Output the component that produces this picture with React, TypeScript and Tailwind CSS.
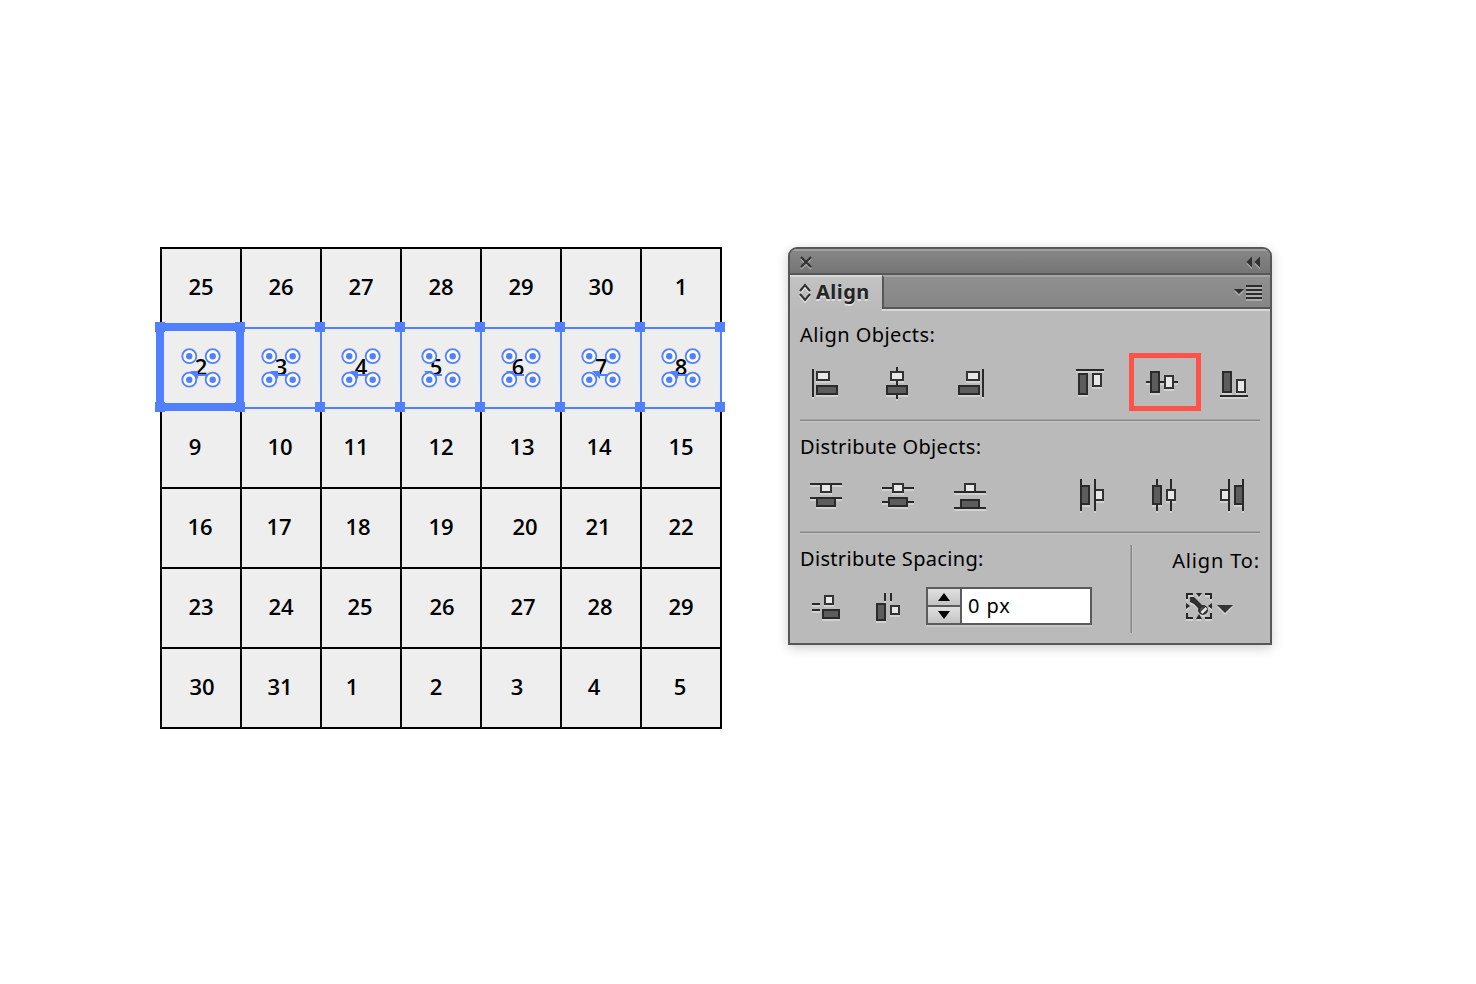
import type { ReactNode } from "react";

type Day = [label: string, shift: number];

const weeks: Day[][] = [
  [["25", 0], ["26", 0], ["27", 0], ["28", 0], ["29", 0], ["30", 0], ["1", 0]],
  [["2", 0], ["3", 0], ["4", 0], ["5", -5], ["6", -3], ["7", 0], ["8", 0]],
  [["9", -6], ["10", -1], ["11", -5], ["12", 0], ["13", 1], ["14", -2], ["15", 0]],
  [["16", -1], ["17", -2], ["18", -3], ["19", 0], ["20", 4], ["21", -3], ["22", 0]],
  [["23", 0], ["24", 0], ["25", -1], ["26", 1], ["27", 2], ["28", -1], ["29", 0]],
  [["30", 1], ["31", -1], ["1", -9], ["2", -5], ["3", -4], ["4", -7], ["5", -1]],
];

const BLUE = "#5080ff";
const markers = [190, 270, 350, 424, 506, 592, 670];

function Selection() {
  return (
    <svg className="pointer-events-none absolute -left-[5px] top-[75px]" width="572" height="92" viewBox="155 322 572 92" fill={BLUE}>
      <rect x="160" y="327" width="562" height="2" />
      <rect x="160" y="407" width="562" height="2" />
      {[0, 1, 2, 3, 4, 5, 6, 7].map((i) => (
        <g key={i}>
          <rect x={160 + i * 80} y="327" width="2" height="82" />
          <rect x={155 + i * 80} y="322" width="10" height="10" />
          <rect x={155 + i * 80} y="402" width="10" height="10" />
        </g>
      ))}
      <rect x="160" y="327" width="80" height="80" fill="none" stroke={BLUE} strokeWidth="8" />
      {markers.map((x, i) => (
        <g key={x}>
          <path d={`M${x} 371h8v8z`} />
          <rect x={x + 4} y="374" width="14" height="2" />
          {[189.3, 212.7].map((cx) =>
            [356.2, 379.7].map((cy) => (
              <g key={`${cx}-${cy}`}>
                <circle cx={cx + i * 80} cy={cy} r="7" fill="#fff" stroke={BLUE} strokeWidth="1.8" />
                <circle cx={cx + i * 80} cy={cy} r="3.2" />
              </g>
            )),
          )}
        </g>
      ))}
    </svg>
  );
}

function Calendar() {
  return (
    <div className="relative h-[482px] w-[562px] border-l-2 border-t-2 border-black bg-[#eee]">
      <div className="grid grid-cols-[repeat(7,80px)] font-['Open_Sans',sans-serif] text-[22px] font-semibold leading-none text-black">
        {weeks.flat().map(([label, shift], i) => (
          <div key={i} className="flex h-20 items-center justify-center border-b-2 border-r-2 border-black pb-[5px]">
            <span style={{ marginLeft: shift * 2 }}>{label}</span>
          </div>
        ))}
      </div>
      <div className="absolute -left-[2px] -top-[2px]">
        <div className="relative">
          <Selection />
        </div>
      </div>
    </div>
  );
}

type Box = { x: number; y: number; w: number; h: number };

function Line({ x, y, w, h }: Box) {
  return <rect x={x} y={y} width={w} height={h} fill="#292929" />;
}

function Dark({ x, y, w, h }: Box) {
  return <rect x={x + 1} y={y + 1} width={w - 2} height={h - 2} fill="#5d5d5d" stroke="#2b2b2b" strokeWidth="2" />;
}

function Light({ x, y, w, h }: Box) {
  return <rect x={x + 1} y={y + 1} width={w - 2} height={h - 2} fill="#e8e8e8" stroke="#333" strokeWidth="2" />;
}

function Icon({ x, y, w = 52, h = 40, children }: { x: number; y: number; w?: number; h?: number; children: ReactNode }) {
  return (
    <svg className="block shrink-0 [filter:drop-shadow(0_2px_0_#d2d2d2)]" width={w} height={h} viewBox={`${x} ${y} ${w} ${h}`}>
      {children}
    </svg>
  );
}

function Divider() {
  return (
    <div className="h-[3px]">
      <div className="h-px bg-[#a3a3a3]" />
      <div className="h-px bg-[#858585]" />
      <div className="h-px bg-[#c5c5c5]" />
    </div>
  );
}

function AlignObjects() {
  return (
    <div className="flex h-10 justify-between">
      <div className="flex gap-5">
        <Icon x={800} y={363}>
          <Line x={812} y={369} w={2} h={28} />
          <Light x={816} y={371} w={14} h={10} />
          <Dark x={816} y={385} w={22} h={10} />
        </Icon>
        <Icon x={872} y={363}>
          <Line x={896} y={367} w={2} h={32} />
          <Light x={890} y={371} w={14} h={10} />
          <Dark x={886} y={385} w={22} h={10} />
        </Icon>
        <Icon x={944} y={363}>
          <Light x={966} y={371} w={14} h={10} />
          <Dark x={958} y={385} w={22} h={10} />
          <Line x={982} y={369} w={2} h={28} />
        </Icon>
      </div>
      <div className="flex gap-5">
        <Icon x={1064} y={363}>
          <Line x={1076} y={369} w={28} h={2} />
          <Dark x={1078} y={373} w={10} h={22} />
          <Light x={1092} y={373} w={10} h={14} />
        </Icon>
        <div className="relative">
          <Icon x={1136} y={363}>
            <Line x={1146} y={381} w={32} h={2} />
            <Dark x={1150} y={371} w={10} h={22} />
            <Light x={1164} y={375} w={10} h={14} />
          </Icon>
          <div className="absolute -left-[7px] -top-[10px] h-[58px] w-[72px] border-[5px] border-[#ff5349]" />
        </div>
        <Icon x={1208} y={363}>
          <Dark x={1222} y={371} w={10} h={22} />
          <Light x={1236} y={379} w={10} h={14} />
          <Line x={1220} y={395} w={28} h={2} />
        </Icon>
      </div>
    </div>
  );
}

function DistributeObjects() {
  return (
    <div className="flex h-10 justify-between">
      <div className="flex gap-5">
        <Icon x={800} y={475}>
          <Light x={820} y={483} w={12} h={10} />
          <Dark x={816} y={497} w={20} h={10} />
          <Line x={810} y={483} w={32} h={2} />
          <Line x={810} y={497} w={32} h={2} />
        </Icon>
        <Icon x={872} y={475}>
          <Line x={882} y={487} w={32} h={2} />
          <Line x={882} y={501} w={32} h={2} />
          <Light x={892} y={483} w={12} h={10} />
          <Dark x={888} y={497} w={20} h={10} />
        </Icon>
        <Icon x={944} y={475}>
          <Light x={964} y={483} w={12} h={10} />
          <Dark x={960} y={499} w={20} h={10} />
          <Line x={954} y={491} w={32} h={2} />
          <Line x={954} y={507} w={32} h={2} />
        </Icon>
      </div>
      <div className="flex gap-5">
        <Icon x={1064} y={475}>
          <Dark x={1080} y={485} w={10} h={20} />
          <Light x={1094} y={489} w={10} h={12} />
          <Line x={1080} y={479} w={2} h={32} />
          <Line x={1094} y={479} w={2} h={32} />
        </Icon>
        <Icon x={1136} y={475}>
          <Line x={1156} y={479} w={2} h={32} />
          <Line x={1170} y={479} w={2} h={32} />
          <Dark x={1152} y={485} w={10} h={20} />
          <Light x={1166} y={489} w={10} h={12} />
        </Icon>
        <Icon x={1208} y={475}>
          <Light x={1220} y={489} w={10} h={12} />
          <Dark x={1234} y={485} w={10} h={20} />
          <Line x={1228} y={479} w={2} h={32} />
          <Line x={1242} y={479} w={2} h={32} />
        </Icon>
      </div>
    </div>
  );
}

function SpacingField() {
  return (
    <div className="flex h-[38px] w-[166px] border-2 border-[#5b5b5b] bg-white [box-shadow:0_2px_0_#c8c8c8]">
      <div className="flex w-[34px] flex-col border-r-2 border-[#5b5b5b]">
        <div className="flex h-[18px] items-center justify-center border-b-2 border-[#5b5b5b] bg-linear-to-b from-[#e0e0e0] to-[#c4c4c4]">
          <svg width="12" height="8" viewBox="0 0 12 8">
            <path d="M6 0l6 8H0z" />
          </svg>
        </div>
        <div className="flex h-4 items-center justify-center bg-linear-to-b from-[#e0e0e0] to-[#c4c4c4]">
          <svg width="12" height="8" viewBox="0 0 12 8">
            <path d="M0 0h12L6 8z" />
          </svg>
        </div>
      </div>
      <div className="pl-[6px] text-[20px] leading-[34px] tracking-[0.9px]">0 px</div>
    </div>
  );
}

function AlignPanel() {
  return (
    <div className="h-[398px] w-[484px] overflow-hidden rounded-t-[9px] border-2 border-[#575757] bg-[#bababa] font-['Noto_Sans',sans-serif] text-black [box-shadow:0_3px_12px_rgba(0,0,0,0.2)]">
      <div className="flex h-[26px] items-center justify-between border-b-2 border-t-2 border-b-[#575757] border-t-[#a2a2a2] bg-linear-to-b from-[#868686] to-[#757575] pl-[10px] pr-[9px]">
        <svg className="[filter:drop-shadow(0_2px_0_#a2a2a2)]" width="12" height="14" viewBox="0 0 12 14">
          <path d="M1 2l10 10M11 2L1 12" stroke="#303030" strokeWidth="2" />
        </svg>
        <svg className="[filter:drop-shadow(0_2px_0_#a2a2a2)]" width="15" height="14" viewBox="0 0 15 14" fill="#303030">
          <path d="M6 1.500v11L0.500 7zM14 1.500v11L8.500 7z" />
        </svg>
      </div>
      <div className="flex h-9">
        <div className="flex w-[92px] items-center border-t-2 border-[#d8d8d8] bg-linear-to-b from-[#c2c2c2] to-[#bababa] pb-1 pl-2">
          <svg className="shrink-0 [filter:drop-shadow(0_2px_0_#dedede)]" width="14" height="20" viewBox="0 0 14 20">
            <path d="M2 9l5-6 5 6M2 12l5 6 5-6" fill="none" stroke="#303030" strokeWidth="2" />
          </svg>
          <span className="ml-1 text-[20px] font-bold leading-none tracking-[0.45px] text-[#252525] [text-shadow:0_2px_0_#dedede]">Align</span>
        </div>
        <div className="flex grow flex-col border-b-2 border-b-[#d8d8d8]">
          <div className="flex h-[34px] items-center justify-end border-b-2 border-l-2 border-t-2 border-b-[#575757] border-l-[#575757] border-t-[#a6a6a6] bg-linear-to-b from-[#8f8f8f] to-[#868686] pr-2">
            <svg className="[filter:drop-shadow(0_2px_0_#acacac)]" width="28" height="16" viewBox="0 0 28 16" fill="#2b2b2b">
              <path d="M0 5h10l-5 5z" />
              <path d="M12 1h16v2H12zM12 5h16v2H12zM12 9h16v2H12zM12 13h16v2H12z" />
            </svg>
          </div>
        </div>
      </div>
      <div className="px-[10px] text-[20px]">
        <div className="h-[52px] pt-[10px] leading-7 tracking-[0.45px]">Align Objects:</div>
        <AlignObjects />
        <div className="h-4" />
        <Divider />
        <div className="h-[53px] pt-[11px] leading-7 tracking-[0.37px]">Distribute Objects:</div>
        <DistributeObjects />
        <div className="h-4" />
        <Divider />
        <div className="flex h-[99px] justify-between">
          <div>
            <div className="pt-[11px] leading-7 tracking-[0.32px]">Distribute Spacing:</div>
            <div className="mt-[14px] flex">
              <Icon x={800} y={587} w={52} h={38}>
                <Line x={812} y={603} w={8} h={2} />
                <Line x={812} y={609} w={8} h={2} />
                <Light x={824} y={595} w={10} h={10} />
                <Dark x={822} y={609} w={18} h={10} />
              </Icon>
              <Icon x={852} y={587} w={74} h={38}>
                <Dark x={876} y={603} w={10} h={18} />
                <Line x={884} y={593} w={2} h={8} />
                <Line x={890} y={593} w={2} h={8} />
                <Light x={890} y={605} w={10} h={10} />
              </Icon>
              <SpacingField />
            </div>
          </div>
          <div className="flex">
            <div className="mt-[11px] h-[88px] w-[3px] border-l border-r border-l-[#a3a3a3] border-r-[#c5c5c5] bg-[#858585]" />
            <div className="flex w-[127px] flex-col items-end">
              <div className="pt-[13px] leading-7 tracking-[0.85px]">Align To:</div>
              <div className="mt-[14px] pr-[26px]">
                <Icon x={1184} y={589} w={50} h={36}>
                  <path
                    d="M1187 599v-5h6M1205 594h6v5M1211 613v5h-6M1193 618h-6v-5"
                    fill="none"
                    stroke="#262626"
                    strokeWidth="2"
                  />
                  <path d="M1196 593h6l-3 4zM1196 619h6l-3-5zM1186 603v6l4-3zM1212 603v6l-4-3z" fill="#262626" />
                  <path d="M1190 597h4l8 8-3 4-5-5-4-2z" fill="#303030" />
                  <circle cx="1203" cy="610" r="4" fill="#4a4a4a" stroke="#303030" strokeWidth="2" />
                  <path d="M1201.500 613l5-5" stroke="#e5e5e5" strokeWidth="2.500" />
                  <path d="M1217 605h16l-8 8z" fill="#333" />
                </Icon>
              </div>
            </div>
          </div>
        </div>
      </div>
    </div>
  );
}

export default function App() {
  return (
    <main className="flex h-[984px] w-[1476px] items-start gap-[66px] overflow-hidden bg-white pl-40 pt-[247px]">
      <Calendar />
      <AlignPanel />
    </main>
  );
}
